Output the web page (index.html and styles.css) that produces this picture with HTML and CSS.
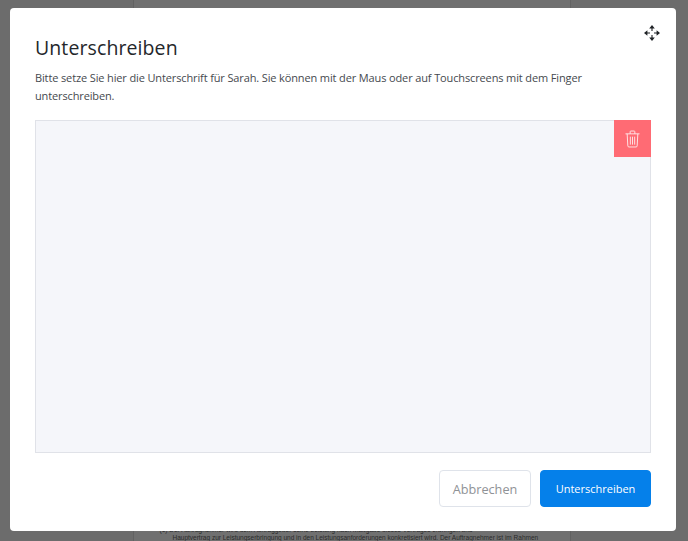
FILE: index.html
```html
<!DOCTYPE html>
<html lang="de">
<head>
<meta charset="utf-8">
<title>Unterschreiben</title>
<link rel="stylesheet" href="styles.css">
</head>
<body>
<div class="backdrop">
  <div class="sheet">
    <p class="sheet-text sheet-text-1">(1) Der Auftragnehmer wird dem Auftraggeber seine Leistung nach Maßgabe dieses Vertrages erbringen und</p>
    <p class="sheet-text sheet-text-2">Hauptvertrag zur Leistungserbringung und in den Leistungsanforderungen konkretisiert wird. Der Auftragnehmer ist im Rahmen</p>
  </div>
</div>
<section class="modal">
  <button class="move" aria-label="Verschieben">
    <svg viewBox="0 0 16 16" width="16" height="16" fill="none" stroke="#1f2226" stroke-width="1.1">
      <path d="M8 2.500V6M8 10v3.500M2.500 8H6M10 8h3.500"/>
      <path fill="#1f2226" stroke="none" d="M8 0l2.800 3.400H5.200zM8 16l-2.800-3.400h5.600zM0 8l3.400-2.800v5.600zM16 8l-3.400 2.800V5.200z"/>
    </svg>
  </button>
  <h1 class="title">Unterschreiben</h1>
  <p class="intro">Bitte setze Sie hier die Unterschrift für Sarah. Sie können mit der Maus oder auf Touchscreens mit dem Finger unterschreiben.</p>
  <div class="pad">
    <button class="clear" aria-label="Löschen">
      <svg class="clear-icon" viewBox="0 0 16 18" width="15" height="18" fill="none" stroke="#fff" stroke-width="1">
        <path d="M0.500 3.500h15M5.500 3.500V1.200q0-.7.700-.7h3.600q.7 0 .7.700v2.300M2.300 3.500l.7 12.800q.1 1.200 1.200 1.200h7.600q1.100 0 1.200-1.200l.7-12.800M5.700 6.500v8.500M8 6.500v8.500M10.300 6.500v8.500"/>
      </svg>
    </button>
  </div>
  <div class="actions">
    <button class="btn btn-cancel">Abbrechen</button>
    <button class="btn btn-sign">Unterschreiben</button>
  </div>
</section>
</body>
</html>
```
FILE: styles.css
```css
* { box-sizing: border-box; }
html, body { margin: 0; height: 100%; overflow: hidden; }
body {
  position: relative;
  width: 688px;
  height: 541px;
  font-family: "Open Sans", "Noto Sans", sans-serif;
  background: #6b6b6b;
}
.backdrop {
  position: absolute;
  inset: 0;
  display: flex;
  justify-content: center;
  background: #6c6c6c;
}
.sheet {
  position: relative;
  width: 438px;
  margin-left: 15px;
  height: 541px;
  background: #707070;
  border-left: 1px solid #626262;
  border-right: 1px solid #626262;
  overflow: hidden;
}
.sheet-text {
  position: absolute;
  margin: 0;
  font-family: "Liberation Sans", sans-serif;
  font-size: 6.500px;
  line-height: 8px;
  color: #2a2a2a;
  white-space: nowrap;
}
.sheet-text-1 { left: 26px; top: 526px; }
.sheet-text-2 { left: 39px; top: 534px; }
.modal {
  position: absolute;
  left: 10px;
  top: 8px;
  width: 666px;
  height: 523px;
  padding: 26px 25px 24px;
  display: flex;
  flex-direction: column;
  background: #fff;
  border-radius: 4px;
}
.move {
  position: absolute;
  top: 17px;
  right: 16px;
  width: 16px;
  height: 16px;
  padding: 0;
  border: 0;
  background: none;
  display: flex;
}
.title {
  margin: 0;
  font-size: 19.500px;
  line-height: 27px;
  font-weight: 500;
  letter-spacing: 0.100px;
  color: #24272b;
}
.intro {
  margin: 8px 0 0;
  font-size: 11px;
  line-height: 18px;
  letter-spacing: -0.130px;
  color: #45494e;
}
.pad {
  position: relative;
  margin-top: 15px;
  height: 333px;
  background: #f5f6fa;
  border: 1px solid #e0e2e8;
  display: flex;
  justify-content: flex-end;
  align-items: flex-start;
}
.clear {
  width: 37px;
  height: 37px;
  margin: -1px -1px 0 0;
  padding: 0;
  border: 0;
  background: #ff6b74;
  display: flex;
  align-items: center;
  justify-content: center;
}
.clear-icon { opacity: 0.85; }
.actions {
  margin-top: 17px;
  display: flex;
  justify-content: flex-end;
  gap: 9px;
}
.btn {
  height: 37px;
  border-radius: 4px;
  font-family: inherit;
  padding: 0;
}
.btn-cancel {
  width: 92px;
  background: #fff;
  border: 1px solid #dfe3ea;
  color: #8f9296;
  font-size: 12.700px;
}
.btn-sign {
  width: 111px;
  background: #0580ea;
  border: 1px solid #0580ea;
  color: #fff;
  font-size: 11px;
  font-weight: 500;
}
```
